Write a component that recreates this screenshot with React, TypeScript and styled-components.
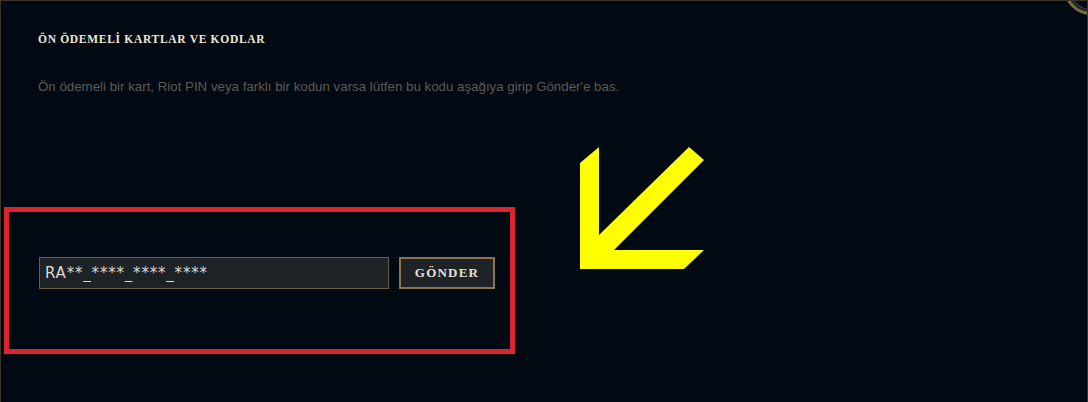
import React, { FC, useState } from 'react';
import styled, { createGlobalStyle } from 'styled-components';

const GlobalStyle = createGlobalStyle`
	html, body {
		margin: 0;
		padding: 0;
		background: #010a13;
	}
	body {
		width: 1088px;
		height: 402px;
		overflow: hidden;
	}
`;

const Panel = styled.div`
	position: relative;
	box-sizing: border-box;
	width: 1088px;
	height: 402px;
	background: #010a13;
	border: 1px solid #3b3527;
	border-bottom: none;
	padding: 30px 0 0 37px;
	overflow: hidden;
`;

const CloseRing = styled.div`
	position: absolute;
	top: -40px;
	right: -31px;
	width: 48px;
	height: 48px;
	border-radius: 50%;
	border: 3px solid #7d6a45;
	box-shadow: inset 0 0 0 2px #1e2328, inset 0 0 0 3px #4a4030;
	background: #010a13;
`;

const Title = styled.h2`
	margin: 0;
	font-family: 'Liberation Serif', serif;
	font-weight: bold;
	font-size: 11.5px;
	line-height: 16px;
	letter-spacing: 0.7px;
	color: #f0e6d2;
`;

const Description = styled.p`
	margin: 32px 0 0;
	font-family: 'Liberation Sans', sans-serif;
	font-size: 13.3px;
	line-height: 16px;
	color: #5b5a56;
`;

const Stage = styled.div`
	display: flex;
	align-items: flex-start;
	margin: 52px 0 0 -34px;
`;

const Highlight = styled.div`
	box-sizing: border-box;
	width: 511px;
	height: 147px;
	margin-top: 60px;
	border: 5px solid #d9262e;
	padding: 45px 0 0 30px;
`;

const CodeForm = styled.form`
	display: flex;
	align-items: center;
	gap: 10px;
`;

const CodeInput = styled.input`
	box-sizing: border-box;
	width: 350px;
	height: 32px;
	padding: 0 5px;
	background: #1e2328;
	border: 1px solid #6e5c3c;
	outline: none;
	font-family: 'DejaVu Sans', sans-serif;
	font-size: 15px;
	letter-spacing: 0.8px;
	color: #dcd8cf;
`;

const SubmitButton = styled.button`
	box-sizing: border-box;
	width: 96px;
	height: 32px;
	background: #1e2328;
	border: 2px solid #8a7550;
	font-family: 'Liberation Serif', serif;
	font-weight: bold;
	font-size: 13px;
	letter-spacing: 1.2px;
	color: #e8e0cc;
	cursor: pointer;
`;

const Arrow = styled.svg`
	flex: none;
	margin-left: 65px;
`;

const App: FC = () => {
	const [code, setCode] = useState('RA**_****_****_****');

	return (
		<>
			<GlobalStyle />
			<Panel>
				<CloseRing />
				<Title>ÖN ÖDEMELİ KARTLAR VE KODLAR</Title>
				<Description>
					Ön ödemeli bir kart, Riot PIN veya farklı bir kodun varsa lütfen bu kodu aşağıya girip Gönder'e bas.
				</Description>
				<Stage>
					<Highlight>
						<CodeForm onSubmit={(e) => e.preventDefault()}>
							<CodeInput value={code} onChange={(e) => setCode(e.target.value)} />
							<SubmitButton type='submit'>GÖNDER</SubmitButton>
						</CodeForm>
					</Highlight>
					<Arrow width='125' height='124' viewBox='579 147 125 124'>
						<polygon
							points='598,147 598,235 688,147 703,160 613,250 703,250 683,269 579,269 579,163'
							fill='#ffff00'
						/>
					</Arrow>
				</Stage>
			</Panel>
		</>
	);
};

export default App;
